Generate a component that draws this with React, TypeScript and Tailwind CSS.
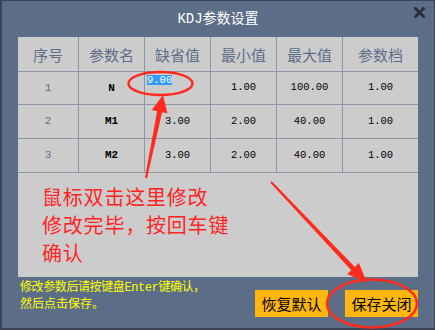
const rows = [
  { no: "1", name: "N", def: "9.00", min: "1.00", max: "100.00", step: "1.00", h: "h-[33px]" },
  { no: "2", name: "M1", def: "3.00", min: "2.00", max: "40.00", step: "1.00", h: "h-[34px]" },
  { no: "3", name: "M2", def: "3.00", min: "2.00", max: "40.00", step: "1.00", h: "h-[34px]" },
];

const headers = ["序号", "参数名", "缺省值", "最小值", "最大值", "参数档"];

const mono = "font-['Liberation_Mono','Noto_Sans_CJK_SC',monospace]";
const cjk = "font-['Noto_Sans_CJK_SC',sans-serif]";

function Cell({ children, last, className = "" }: { children?: React.ReactNode; last?: boolean; className?: string }) {
  return (
    <div
      className={`flex items-center justify-center border-b border-[#8a95a8] ${last ? "" : "border-r"} ${className}`}
    >
      {children}
    </div>
  );
}

export default function App() {
  return (
    <div className="relative w-[435px] h-[330px] overflow-hidden">
      <div className="flex h-full w-full flex-col bg-[#5c6d88] border-l-2 border-b-2 border-t border-r border-[#3a4456]">
        {/* Title */}
        <div className="relative flex h-[36px] shrink-0 items-center justify-center">
          <span className={`${mono} text-[14px] text-white leading-none`}>KDJ参数设置</span>
          <svg className="absolute right-[9px] top-[6px]" width="11" height="11" viewBox="0 0 11 11">
            <path d="M1.5 1.5 L9.5 9.5 M9.5 1.5 L1.5 9.5" stroke="#262e3c" strokeWidth="3" strokeLinecap="square" />
          </svg>
        </div>

        {/* Table panel */}
        <div className="ml-[16px] w-[400px] h-[240px] shrink-0 bg-[#cccccc] flex flex-col">
          <div className="grid grid-cols-[61px_66px_66px_66px_66px_75px]">
            {headers.map((t, i) => (
              <Cell key={t} last={i === 5} className="h-[35px]">
                <span className={`${cjk} text-[15px] leading-none text-[#5e6e89]`}>{t}</span>
              </Cell>
            ))}
            {rows.map((r) => (
              <div key={r.no} className="contents">
                <Cell className={r.h}>
                  <span className={`${mono} text-[11px] text-[#5e6e89]`}>{r.no}</span>
                </Cell>
                <Cell className={r.h}>
                  <span className={`${mono} text-[11px] font-bold text-black`}>{r.name}</span>
                </Cell>
                {r.no === "1" ? (
                  <div className={`${r.h} flex items-start justify-start border-b border-r border-[#8a95a8] pl-[2px] pt-[3px]`}>
                    <span className={`${mono} text-[10.5px] leading-[10px] bg-[#3399ff] text-white`}>{r.def}</span>
                  </div>
                ) : (
                  <Cell className={r.h}>
                    <span className={`${mono} text-[10.5px] text-black`}>{r.def}</span>
                  </Cell>
                )}
                <Cell className={r.h}>
                  <span className={`${mono} text-[10.5px] text-black`}>{r.min}</span>
                </Cell>
                <Cell className={r.h}>
                  <span className={`${mono} text-[10.5px] text-black`}>{r.max}</span>
                </Cell>
                <Cell className={r.h} last>
                  <span className={`${mono} text-[10.5px] text-black`}>{r.step}</span>
                </Cell>
              </div>
            ))}
          </div>
          <div className={`${cjk} pl-[24px] pt-[10px] text-[20px] leading-[28px] text-[#ff2424]`}>
            <p className="tracking-[0.8px]">鼠标双击这里修改</p>
            <p className="tracking-[0.8px]">修改完毕，按回车键</p>
            <p className="tracking-[0.8px]">确认</p>
          </div>
        </div>

        {/* Bottom bar */}
        <div className="flex flex-1 justify-between pl-[18px] pr-[16px]">
          <div className={`${mono} pt-[3px] text-[12px] leading-[17px] text-[#ffff00]`}>
            <p className="tracking-[-0.4px]">修改参数后请按键盘Enter键确认，</p>
            <p>然后点击保存。</p>
          </div>
          <div className="mt-[13px] flex gap-[17px] self-start">
            <button className={`${cjk} h-[27px] w-[73px] bg-[#ffb60f] text-[15px] leading-none text-black`}>恢复默认</button>
            <button className={`${cjk} h-[27px] w-[73px] bg-[#ffb60f] text-[15px] leading-none text-black`}>保存关闭</button>
          </div>
        </div>
      </div>

      {/* Red annotations */}
      <svg className="pointer-events-none absolute left-0 top-0" width="435" height="330" viewBox="0 0 435 330">
        <ellipse cx="160.5" cy="83.5" rx="32" ry="11.5" fill="none" stroke="#ff2a1c" strokeWidth="2.5" />
        <polygon
          points="145,177.8 157.1,111.2 151.8,110.1 163,95 167.4,113.3 162.1,112.2 147,178.2"
          fill="#ff2a1c"
        />
        <ellipse cx="372" cy="303.5" rx="45" ry="24" fill="none" stroke="#ff2a1c" strokeWidth="2.5" />
        <polygon
          points="270.3,182.7 351.3,270.3 347.3,274.1 367,283 358.9,263.1 354.9,266.9 271.7,181.3"
          fill="#ff2a1c"
        />
      </svg>
    </div>
  );
}
